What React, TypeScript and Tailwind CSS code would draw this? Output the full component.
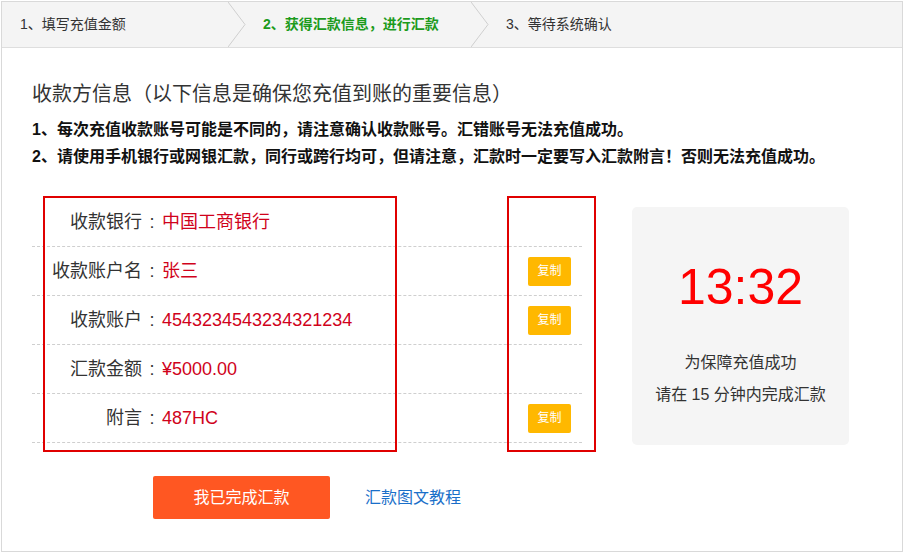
import React from "react";

const font = { fontFamily: '"Liberation Sans", "Noto Sans CJK SC", sans-serif' };

function Chevron() {
  return (
    <svg width="18" height="45" viewBox="0 0 18 45" className="shrink-0 block">
      <polyline points="0,0 17,22.5 0,45" fill="none" stroke="#cfcfcf" strokeWidth="1" />
    </svg>
  );
}

type Row = { label: string; value: string; copy?: boolean };

const rows: Row[] = [
  { label: "收款银行", value: "中国工商银行" },
  { label: "收款账户名", value: "张三", copy: true },
  { label: "收款账户", value: "4543234543234321234", copy: true },
  { label: "汇款金额", value: "¥5000.00" },
  { label: "附言", value: "487HC", copy: true },
];

export default function App() {
  return (
    <div className="w-[904px] h-[554px] bg-white p-px" style={font}>
      <div className="w-[902px] h-[551px] border border-[#d9d9d9] flex flex-col">
        {/* steps */}
        <div className="h-[46px] shrink-0 bg-[#f4f4f4] border-b border-[#dedede] flex items-center text-[14px] text-[#333]">
          <div className="w-[226px] pl-[18px]">1、填写充值金额</div>
          <Chevron />
          <div className="w-[225px] pl-[17px] font-bold text-[#1c9b1c]">2、获得汇款信息，进行汇款</div>
          <Chevron />
          <div className="pl-[17px]">3、等待系统确认</div>
        </div>

        <div className="pl-[30px] pr-[20px]">
          <h1 className="mt-[32px] text-[20px] leading-[28px] text-[#333] font-normal">
            收款方信息（以下信息是确保您充值到账的重要信息）
          </h1>
          <div className="mt-[8px] text-[16px] leading-[27px] font-bold text-[#111]">
            <p>1、每次充值收款账号可能是不同的，请注意确认收款账号。汇错账号无法充值成功。</p>
            <p>2、请使用手机银行或网银汇款，同行或跨行均可，但请注意，汇款时一定要写入汇款附言！否则无法充值成功。</p>
          </div>

          <div className="mt-[28px] flex items-start">
            <div className="relative w-[550px]">
              {rows.map((r) => (
                <div
                  key={r.label}
                  className="h-[49px] border-b border-dashed border-[#cfcfcf] flex items-center text-[18px]"
                >
                  <div className="w-[130px] flex justify-end text-[#333]">
                    <span>{r.label}</span>
                    <span className="w-[20px] text-center">:</span>
                  </div>
                  <div className="text-[#d0021b]">{r.value}</div>
                  {r.copy && (
                    <button className="ml-auto mr-[11px] w-[43px] h-[29px] rounded-[2px] bg-[#ffb800] text-white text-[12px]">
                      复制
                    </button>
                  )}
                </div>
              ))}
              <div className="absolute left-[11px] top-[-2px] w-[354px] h-[256px] border-2 border-[#e00000] pointer-events-none" />
              <div className="absolute left-[475px] top-[-2px] w-[89px] h-[256px] border-2 border-[#e00000] pointer-events-none" />
            </div>

            <div className="ml-[50px] mt-[9px] w-[217px] h-[238px] rounded-[5px] bg-[#f5f5f5] flex flex-col items-center pt-[50px]">
              <div className="text-[50px] leading-[60px] text-[#ff0000]">13:32</div>
              <div className="mt-[30px] text-[16px] leading-[32px] text-[#333] text-center">
                <p>为保障充值成功</p>
                <p>请在 15 分钟内完成汇款</p>
              </div>
            </div>
          </div>

          <div className="mt-[31px] flex items-center">
            <button className="ml-[121px] w-[177px] h-[43px] rounded-[2px] bg-[#ff5722] text-white text-[16px]">
              我已完成汇款
            </button>
            <a className="ml-[35px] text-[16px] text-[#1a6fc9] cursor-pointer">汇款图文教程</a>
          </div>
        </div>
      </div>
    </div>
  );
}
